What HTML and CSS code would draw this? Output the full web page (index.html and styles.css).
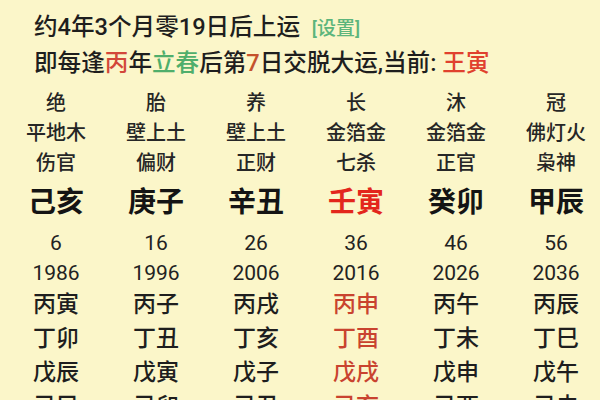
FILE: index.html
```html
<!DOCTYPE html>
<html lang="zh-CN">
<head>
<meta charset="utf-8">
<link rel="stylesheet" href="styles.css">
</head>
<body>
<div class="page">
  <div class="info">
    <div class="line">约4年3个月零19日后上运 <span class="set">[设置]</span></div>
    <div class="line">即每逢<span class="r1">丙</span>年<span class="g">立春</span>后第<span class="o">7</span>日交脱大运,当前: <span class="r2">王寅</span></div>
  </div>
  <div class="table">
    <div class="row small">
      <span>绝</span><span>胎</span><span>养</span><span>长</span><span>沐</span><span>冠</span>
    </div>
    <div class="row small">
      <span>平地木</span><span>壁上土</span><span>壁上土</span><span>金箔金</span><span>金箔金</span><span>佛灯火</span>
    </div>
    <div class="row small">
      <span>伤官</span><span>偏财</span><span>正财</span><span>七杀</span><span>正官</span><span>枭神</span>
    </div>
    <div class="row big">
      <span>己亥</span><span>庚子</span><span>辛丑</span><span class="hot">壬寅</span><span>癸卯</span><span>甲辰</span>
    </div>
    <div class="row num">
      <span>6</span><span>16</span><span>26</span><span>36</span><span>46</span><span>56</span>
    </div>
    <div class="row num">
      <span>1986</span><span>1996</span><span>2006</span><span>2016</span><span>2026</span><span>2036</span>
    </div>
    <div class="row gz">
      <span>丙寅</span><span>丙子</span><span>丙戌</span><span class="cur">丙申</span><span>丙午</span><span>丙辰</span>
    </div>
    <div class="row gz">
      <span>丁卯</span><span>丁丑</span><span>丁亥</span><span class="cur">丁酉</span><span>丁未</span><span>丁巳</span>
    </div>
    <div class="row gz">
      <span>戊辰</span><span>戊寅</span><span>戊子</span><span class="cur">戊戌</span><span>戊申</span><span>戊午</span>
    </div>
    <div class="row gz">
      <span>己巳</span><span>己卯</span><span>己丑</span><span class="cur">己亥</span><span>己酉</span><span>己未</span>
    </div>
  </div>
</div>
</body>
</html>
```
FILE: styles.css
```css
html, body {
  margin: 0;
  padding: 0;
  background: #fbf6c9;
  overflow: hidden;
}
body {
  width: 600px;
  height: 400px;
  font-family: "Roboto", "Noto Sans CJK SC", sans-serif;
  font-weight: 500;
  color: #1c1c1c;
}
.page {
  display: flex;
  flex-direction: column;
}
.info {
  padding: 10px 0 0 34px;
  font-size: 23.6px;
  line-height: 34px;
  color: #1e1e1e;
}
.line {
  white-space: nowrap;
}
.set {
  font-size: 19px;
  color: #5cb57c;
  margin-left: 6px;
}
.r1 { color: #d2473a; }
.g { color: #4fae6b; }
.o { color: #c4522c; }
.r2 { color: #e0412e; }

.table {
  margin-top: 8px;
  margin-left: 6px;
  display: flex;
  flex-direction: column;
}
.row {
  display: grid;
  grid-template-columns: repeat(6, 100px);
  text-align: center;
  white-space: nowrap;
}
.small {
  font-size: 20px;
  line-height: 30px;
  color: #262626;
}
.big {
  font-size: 28px;
  font-weight: 700;
  line-height: 50px;
  color: #141414;
}
.num {
  font-size: 21px;
  font-weight: 400;
  line-height: 30px;
  color: #222;
}
.gz {
  font-size: 23px;
  line-height: 34px;
  color: #1e1e1e;
}
.hot { color: #e3261c; }
.cur { color: #c9432f; }
```
